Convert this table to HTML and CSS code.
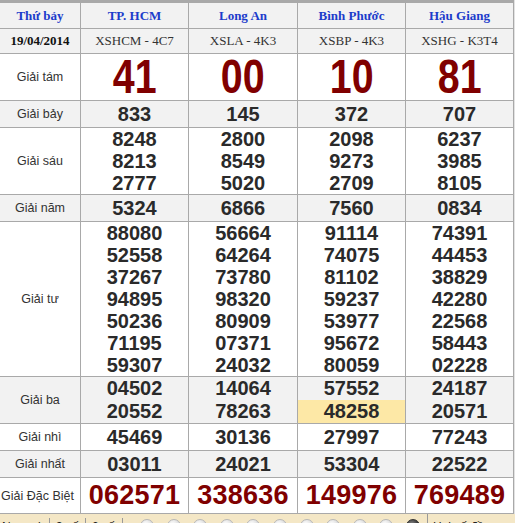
FILE: index.html
```html
<!DOCTYPE html>
<html lang="vi">
<head>
<meta charset="utf-8">
<title>Kết quả xổ số</title>
<link rel="stylesheet" href="styles.css">
</head>
<body>
<div class="board">
  <div class="cell head day">Thứ bảy</div>
  <div class="cell head">TP. HCM</div>
  <div class="cell head">Long An</div>
  <div class="cell head">Bình Phước</div>
  <div class="cell head">Hậu Giang</div>

  <div class="cell alt date">19/04/2014</div>
  <div class="cell alt code">XSHCM - 4C7</div>
  <div class="cell alt code">XSLA - 4K3</div>
  <div class="cell alt code">XSBP - 4K3</div>
  <div class="cell alt code">XSHG - K3T4</div>

  <div class="cell label">Giải tám</div>
  <div class="cell big"><span>41</span></div>
  <div class="cell big"><span>00</span></div>
  <div class="cell big"><span>10</span></div>
  <div class="cell big"><span>81</span></div>

  <div class="cell alt label">Giải bảy</div>
  <div class="cell alt num">833</div>
  <div class="cell alt num">145</div>
  <div class="cell alt num">372</div>
  <div class="cell alt num">707</div>

  <div class="cell label">Giải sáu</div>
  <div class="cell num"><div>8248</div><div>8213</div><div>2777</div></div>
  <div class="cell num"><div>2800</div><div>8549</div><div>5020</div></div>
  <div class="cell num"><div>2098</div><div>9273</div><div>2709</div></div>
  <div class="cell num"><div>6237</div><div>3985</div><div>8105</div></div>

  <div class="cell alt label">Giải năm</div>
  <div class="cell alt num">5324</div>
  <div class="cell alt num">6866</div>
  <div class="cell alt num">7560</div>
  <div class="cell alt num">0834</div>

  <div class="cell label">Giải tư</div>
  <div class="cell num"><div>88080</div><div>52558</div><div>37267</div><div>94895</div><div>50236</div><div>71195</div><div>59307</div></div>
  <div class="cell num"><div>56664</div><div>64264</div><div>73780</div><div>98320</div><div>80909</div><div>07371</div><div>24032</div></div>
  <div class="cell num"><div>91114</div><div>74075</div><div>81102</div><div>59237</div><div>53977</div><div>95672</div><div>80059</div></div>
  <div class="cell num"><div>74391</div><div>44453</div><div>38829</div><div>42280</div><div>22568</div><div>58443</div><div>02228</div></div>

  <div class="cell alt label">Giải ba</div>
  <div class="cell alt num pair"><div>04502</div><div>20552</div></div>
  <div class="cell alt num pair"><div>14064</div><div>78263</div></div>
  <div class="cell alt num pair"><div>57552</div><div class="hit">48258</div></div>
  <div class="cell alt num pair"><div>24187</div><div>20571</div></div>

  <div class="cell label">Giải nhì</div>
  <div class="cell num">45469</div>
  <div class="cell num">30136</div>
  <div class="cell num">27997</div>
  <div class="cell num">77243</div>

  <div class="cell alt label">Giải nhất</div>
  <div class="cell alt num">03011</div>
  <div class="cell alt num">24021</div>
  <div class="cell alt num">53304</div>
  <div class="cell alt num">22522</div>

  <div class="cell label special-label">Giải Đặc Biệt</div>
  <div class="cell special">062571</div>
  <div class="cell special">338636</div>
  <div class="cell special">149976</div>
  <div class="cell special">769489</div>
</div>
<div class="toolbar">
  <span class="tool t-normal">Normal</span>
  <span class="tool t-three">3 số</span>
  <span class="tool t-two">2 số</span>
  <div class="dots">
    <span class="dot"></span><span class="dot"></span><span class="dot"></span><span class="dot"></span><span class="dot"></span>
    <span class="dot"></span><span class="dot"></span><span class="dot"></span><span class="dot"></span><span class="dot"></span>
    <span class="dot dark"></span>
  </div>
  <span class="tool t-last">Hai số đầu</span>
</div>
</body>
</html>
```

FILE: styles.css
```css
html, body {
  margin: 0;
  padding: 0;
  height: 100%;
  overflow: hidden;
}

body {
  background: #e2e2e2;
  font-family: "Liberation Sans", Arial, sans-serif;
  color: #333;
}

.board {
  display: grid;
  grid-template-columns: 80px 107px 108px 107px 107px;
  grid-template-rows: 25px 24px 46px 26px 66px 26px 154px 46px 26px 26px 35px;
  gap: 1px;
  width: 514px;
  box-sizing: border-box;
  padding: 3px 1px 1px 0;
  background: #a9a9a9;
}

.cell {
  background: #ffffff;
  display: flex;
  flex-direction: column;
  align-items: center;
  justify-content: center;
  text-align: center;
  overflow: hidden;
}

.cell.alt,
.cell.head {
  background: #f2f2f2;
}

.head {
  font-family: "Liberation Serif", "Times New Roman", serif;
  font-weight: bold;
  font-size: 13px;
  color: #1c3ccb;
}

.date {
  font-family: "Liberation Serif", "Times New Roman", serif;
  font-weight: bold;
  font-size: 13px;
  color: #111;
}

.code {
  font-family: "Liberation Serif", "Times New Roman", serif;
  font-size: 13px;
  color: #333;
}

.label {
  font-size: 12.5px;
  color: #333;
}

.special-label {
  align-items: flex-start;
  padding-left: 1px;
  white-space: nowrap;
}

.num {
  font-weight: bold;
  font-size: 20px;
  line-height: 22px;
  color: #2a2a2a;
  align-items: stretch;
}

.pair > div {
  line-height: 23px;
}

.hit {
  background: #fde8a6;
}

.cell.big {
  overflow: visible;
}

.big span {
  display: inline-block;
  font-weight: bold;
  font-size: 48px;
  line-height: 1;
  color: #800000;
  transform: scaleX(0.82);
}

.special {
  font-weight: bold;
  font-size: 27px;
  color: #800000;
  letter-spacing: 0.2px;
}

.toolbar {
  position: relative;
  height: 20px;
  background: #f4e7c6;
  font-size: 12px;
  color: #222;
}

.tool {
  position: absolute;
  top: 4px;
  line-height: 18px;
}

.t-normal { left: 2px; }
.t-three { left: 57px; border-left: 1px solid #9a9a9a; padding-left: 6px; margin-left: -8px; }
.t-two { left: 92px; border-left: 1px solid #9a9a9a; padding-left: 6px; margin-left: -7px; }
.t-last { left: 427px; border-left: 1px solid #9a9a9a; padding-left: 5px; top: 0; padding-top: 4px; }

.t-two::after {
  content: "";
  position: absolute;
  right: -8px;
  top: 0;
  width: 1px;
  height: 22px;
  background: #9a9a9a;
}

.dots {
  position: absolute;
  left: 140px;
  top: 5px;
  display: flex;
  gap: 12.6px;
}

.dot {
  width: 14px;
  height: 14px;
  border-radius: 50%;
  box-sizing: border-box;
  border: 1px solid #b8b8b8;
  background: radial-gradient(circle at 40% 35%, #ffffff 0%, #dcdcdc 60%, #c4c4c4 100%);
}

.dot.dark {
  border-color: #333;
  background: radial-gradient(circle at 40% 35%, #888 0%, #333 60%, #111 100%);
}
```
